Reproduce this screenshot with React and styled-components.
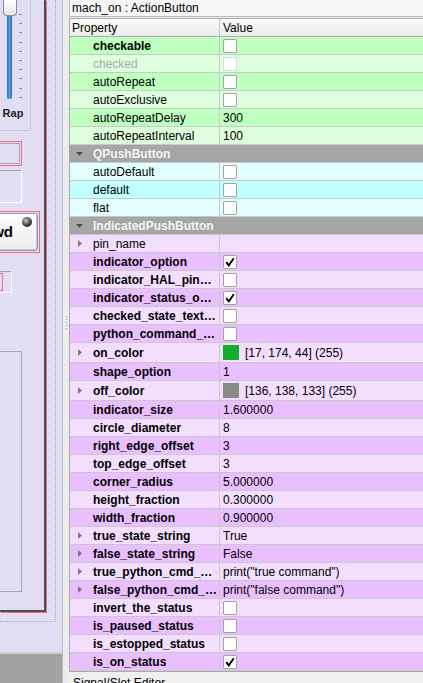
import React from 'react';
import styled, { createGlobalStyle, css } from 'styled-components';

const GlobalStyle = createGlobalStyle`
  html, body { margin: 0; padding: 0; }
  body {
    font-family: "Liberation Sans", Arial, sans-serif;
    font-size: 12px;
    color: #000;
    background: #efefef;
  }
  * { box-sizing: border-box; }
`;

const palette = {
  green: ['rgb(191, 255, 191)', 'rgb(222, 255, 222)'],
  cyan: ['rgb(194, 255, 255)', 'rgb(228, 255, 255)'],
  purple: ['rgb(234, 191, 255)', 'rgb(244, 222, 255)'],
};

const Screen = styled.div`
  display: flex;
  width: 423px;
  height: 683px;
  overflow: hidden;
`;

/* ---------- form canvas on the left ---------- */

const Designer = styled.div`
  display: flex;
  flex-direction: column;
  width: 62px;
  flex-shrink: 0;
`;
const Canvas = styled.div`
  height: 652px;
  background: #e1ddf3;
  overflow: hidden;
`;
const Bounds = styled.div`
  width: 56px;
  height: 622px;
  border-right: 1px dotted #a9a5bd;
  border-bottom: 1px dotted #a9a5bd;
`;
const Form = styled.div`
  display: flex;
  flex-direction: column;
  width: 46px;
  height: 612px;
  overflow: hidden;
  border-right: 2px solid #4d4b57;
  border-bottom: 2px solid #4d4b57;
  box-shadow: 1px 1px 0 #ee6f7f;
`;
const Gutter = styled.div`
  flex: 1;
  background: #a2a2a2;
  border-top: 2px solid #cfcfcf;
`;

const Placed = styled.div`
  flex-shrink: 0;
  width: ${({ $w }) => $w}px;
  height: ${({ $h }) => $h}px;
  margin-top: ${({ $top }) => $top}px;
  margin-left: ${({ $right, $w }) => $right - $w}px;
`;

const SliderGroup = styled(Placed)`
  display: flex;
  flex-direction: column;
  border-right: 1px dotted #b3afc7;
  border-bottom: 1px dotted #b3afc7;
`;
const SliderRow = styled.div`
  display: flex;
  height: 100px;
`;
const SliderCol = styled.div`
  display: flex;
  flex-direction: column;
  width: 19px;
`;
const Handle = styled.div`
  width: 14px;
  height: 16px;
  margin-left: 3px;
  border: 1px solid #8d8b99;
  border-top: none;
  border-radius: 0 0 4px 4px;
  background: linear-gradient(#ffffff, #e4e4ea);
`;
const Track = styled.div`
  width: 5px;
  height: 83px;
  margin-left: 7px;
  background: linear-gradient(90deg, #2c6fb6, #4c9de6 50%, #2c6fb6);
  border-radius: 0 0 2px 2px;
`;
const Ticks = styled.div`
  display: flex;
  flex-direction: column;
  gap: 8.2px;
  padding-top: 14px;
`;
const Tick = styled.div`
  width: 3px;
  height: 1px;
  background: #8e8aa2;
`;
const SliderCaption = styled.div`
  width: 26px;
  margin-top: 7px;
  text-align: center;
  font-size: 11px;
  font-weight: bold;
  color: #222;
`;

const Selected = styled(Placed)`
  padding: 1px;
  border: 1px solid #ee6f7f;
`;
const FlatBox = styled.div`
  height: 100%;
  border: 1px solid #a8a4b8;
`;
const Sunken = styled(Placed)`
  border: 1px solid #a6a2b6;
  border-right-color: #ffffff;
  border-bottom-color: #ffffff;
  ${({ $inner }) =>
    $inner &&
    css`
      display: flex;
      justify-content: flex-end;
      padding: 1px 8px 1px 0;
    `};
`;
const PinkMark = styled.div`
  width: 20px;
  height: 100%;
  border: 1px solid #ee6f7f;
`;
const Button = styled.div`
  position: relative;
  display: flex;
  align-items: center;
  justify-content: flex-end;
  height: 100%;
  padding: 0 24px 2px 0;
  border: 1px solid #9a98a8;
  border-radius: 3px;
  background: linear-gradient(#fdfdfd, #ececf0);
  box-shadow: inset -1px -1px 0 #c9c7d3;
  font-size: 15px;
  font-weight: bold;
`;
const Led = styled.span`
  position: absolute;
  top: 3px;
  right: 5px;
  width: 10px;
  height: 10px;
  border-radius: 50%;
  background: radial-gradient(circle at 40% 35%, #c9c9c9, #555 45%, #1a1a1a 80%);
`;
const Panel = styled(Placed)`
  border: 1px solid #a8a4b8;
`;

/* ---------- splitter ---------- */

const Splitter = styled.div`
  display: flex;
  flex-direction: column;
  align-items: center;
  width: 7px;
  flex-shrink: 0;
  padding-top: 316px;
  background: #ececec;
  border-left: 1px solid #bdbdbd;
`;
const Grip = styled.div`
  width: 1px;
  height: 15px;
  background: repeating-linear-gradient(#9a9a9a 0 1px, transparent 1px 3px);
`;

/* ---------- property editor ---------- */

const Inspector = styled.div`
  display: flex;
  flex-direction: column;
  flex: 1;
  min-width: 0;
  background: #efefef;
`;
const ObjectName = styled.div`
  height: 17px;
  padding-left: 2px;
  line-height: 16px;
  background: #f6f6f6;
  border-left: 1px solid #b9b9b9;
  border-bottom: 1px solid #b9b9b9;
  white-space: nowrap;
`;
const Table = styled.div`
  display: flex;
  flex-direction: column;
  margin-top: 1px;
  border: 1px solid #a9a9a9;
  border-right: none;
  background: #fff;
`;
const Row = styled.div`
  display: grid;
  grid-template-columns: 150px 1fr;
  height: ${({ $tall }) => ($tall ? 20 : 18)}px;
  background: ${({ $bg }) => $bg};
  border-bottom: 1px solid #c9c9c9;
  white-space: nowrap;
`;
const HeaderRow = styled(Row)`
  background: linear-gradient(#fbfbfb, #ebebeb);
  border-bottom-color: #adadad;
`;
const GroupRow = styled.div`
  display: flex;
  align-items: center;
  height: 18px;
  padding-left: 6px;
  background: #a5a5a5;
  border-bottom: 1px solid #c9c9c9;
  color: #f4f4f4;
  font-weight: bold;
`;
const PropCell = styled.div`
  display: flex;
  align-items: center;
  padding-left: ${({ $header }) => ($header ? 2 : 8)}px;
  border-right: 1px solid #c9c9c9;
  overflow: hidden;
  font-weight: ${({ $bold }) => ($bold ? 'bold' : 'normal')};
  color: ${({ $disabled }) => ($disabled ? '#a9a9a9' : '#000')};
`;
const ValueCell = styled.div`
  display: flex;
  align-items: center;
  gap: 6px;
  padding-left: 3px;
  overflow: hidden;
`;
const Twisty = styled.span`
  display: flex;
  align-items: center;
  width: ${({ $wide }) => ($wide ? 17 : 15)}px;
  flex-shrink: 0;
`;
const Check = styled.span`
  display: flex;
  align-items: center;
  justify-content: center;
  width: 14px;
  height: 14px;
  background: #fff;
  border: 1px solid ${({ $disabled }) => ($disabled ? '#d9d9d9' : '#a4a4a4')};
  border-radius: 1px;
`;
const Swatch = styled.span`
  width: 16px;
  height: 15px;
  background: ${({ $color }) => $color};
`;
const DockGrip = styled.div`
  height: 6px;
  margin: 1px 0 0 249px;
  width: 14px;
  background: repeating-linear-gradient(90deg, #b5b5b5 0 1px, transparent 1px 3px);
  background-size: 100% 1px;
  background-repeat: no-repeat;
  background-position: 0 2px;
`;
const DockTitle = styled.div`
  padding: 3px 0 0 4px;
  white-space: nowrap;
`;

function ArrowRight() {
  return (
    <svg width="4" height="7" viewBox="0 0 4 7">
      <path d="M0 0 L4 3.5 L0 7 Z" fill="#7a7a7a" />
    </svg>
  );
}

function ArrowDown() {
  return (
    <svg width="7" height="4" viewBox="0 0 7 4">
      <path d="M0 0 L7 0 L3.5 4 Z" fill="#4f4f4f" />
    </svg>
  );
}

function CheckBox({ on, disabled }) {
  return (
    <Check $disabled={disabled}>
      {on && (
        <svg width="10" height="10" viewBox="0 0 10 10">
          <path d="M1.2 5.2 L3.8 8.4 L8.8 1.2" fill="none" stroke="#000" strokeWidth="1.9" />
        </svg>
      )}
    </Check>
  );
}

const groups = [
  {
    color: 'green',
    rows: [
      { name: 'checkable', bold: true, check: false },
      { name: 'checked', disabled: true, check: false },
      { name: 'autoRepeat', check: false },
      { name: 'autoExclusive', check: false },
      { name: 'autoRepeatDelay', text: '300' },
      { name: 'autoRepeatInterval', text: '100' },
    ],
  },
  {
    title: 'QPushButton',
    color: 'cyan',
    rows: [
      { name: 'autoDefault', check: false },
      { name: 'default', check: false },
      { name: 'flat', check: false },
    ],
  },
  {
    title: 'IndicatedPushButton',
    color: 'purple',
    rows: [
      { name: 'pin_name', expand: true, text: '' },
      { name: 'indicator_option', bold: true, check: true },
      { name: 'indicator_HAL_pin…', bold: true, check: false },
      { name: 'indicator_status_o…', bold: true, check: true },
      { name: 'checked_state_text…', bold: true, check: false },
      { name: 'python_command_…', bold: true, check: false },
      { name: 'on_color', bold: true, expand: true, color: 'rgb(17, 174, 44)', text: '[17, 174, 44] (255)' },
      { name: 'shape_option', bold: true, text: '1' },
      { name: 'off_color', bold: true, expand: true, color: 'rgb(136, 138, 133)', text: '[136, 138, 133] (255)' },
      { name: 'indicator_size', bold: true, text: '1.600000' },
      { name: 'circle_diameter', bold: true, text: '8' },
      { name: 'right_edge_offset', bold: true, text: '3' },
      { name: 'top_edge_offset', bold: true, text: '3' },
      { name: 'corner_radius', bold: true, text: '5.000000' },
      { name: 'height_fraction', bold: true, text: '0.300000' },
      { name: 'width_fraction', bold: true, text: '0.900000' },
      { name: 'true_state_string', bold: true, expand: true, text: 'True' },
      { name: 'false_state_string', bold: true, expand: true, text: 'False' },
      { name: 'true_python_cmd_…', bold: true, expand: true, text: 'print("true command")' },
      { name: 'false_python_cmd_…', bold: true, expand: true, text: 'print("false command")' },
      { name: 'invert_the_status', bold: true, check: false },
      { name: 'is_paused_status', bold: true, check: false },
      { name: 'is_estopped_status', bold: true, check: false },
      { name: 'is_on_status', bold: true, check: true },
    ],
  },
];

function PropertyRows() {
  const out = [];
  let index = 0;
  groups.forEach((group) => {
    if (group.title) {
      out.push(
        <GroupRow key={group.title}>
          <Twisty $wide>
            <ArrowDown />
          </Twisty>
          {group.title}
        </GroupRow>
      );
      index++;
    }
    group.rows.forEach((row) => {
      const bg = palette[group.color][index % 2 === 0 ? 0 : 1];
      out.push(
        <Row key={row.name} $bg={bg} $tall={!!row.color}>
          <PropCell $bold={row.bold} $disabled={row.disabled}>
            <Twisty>{row.expand && <ArrowRight />}</Twisty>
            {row.name}
          </PropCell>
          <ValueCell>
            {row.check !== undefined && <CheckBox on={row.check} disabled={row.disabled} />}
            {row.color && <Swatch $color={row.color} />}
            {row.text}
          </ValueCell>
        </Row>
      );
      index++;
    });
  });
  return out;
}

export default function App() {
  return (
    <>
      <GlobalStyle />
      <Screen>
        <Designer>
          <Canvas>
            <Bounds>
              <Form>
                <SliderGroup $w={31} $h={131} $top={0} $right={31}>
                  <SliderRow>
                    <SliderCol>
                      <Handle />
                      <Track />
                    </SliderCol>
                    <Ticks>
                      {Array.from({ length: 10 }, (_, i) => (
                        <Tick key={i} />
                      ))}
                    </Ticks>
                  </SliderRow>
                  <SliderCaption>Rap</SliderCaption>
                </SliderGroup>
                <Selected $w={62} $h={25} $top={10} $right={22}>
                  <FlatBox />
                </Selected>
                <Sunken $w={60} $h={33} $top={4} $right={22} />
                <Selected $w={80} $h={42} $top={8} $right={40}>
                  <Button>
                    Fwd
                    <Led />
                  </Button>
                </Selected>
                <Sunken $inner $w={60} $h={22} $top={18} $right={12}>
                  <PinkMark />
                </Sunken>
                <Panel $w={60} $h={241} $top={58} $right={22} />
              </Form>
            </Bounds>
          </Canvas>
          <Gutter />
        </Designer>

        <Splitter>
          <Grip />
        </Splitter>

        <Inspector>
          <ObjectName>mach_on : ActionButton</ObjectName>
          <Table>
            <HeaderRow>
              <PropCell $header>Property</PropCell>
              <ValueCell>Value</ValueCell>
            </HeaderRow>
            <PropertyRows />
          </Table>
          <DockGrip />
          <DockTitle>Signal/Slot Editor</DockTitle>
        </Inspector>
      </Screen>
    </>
  );
}
